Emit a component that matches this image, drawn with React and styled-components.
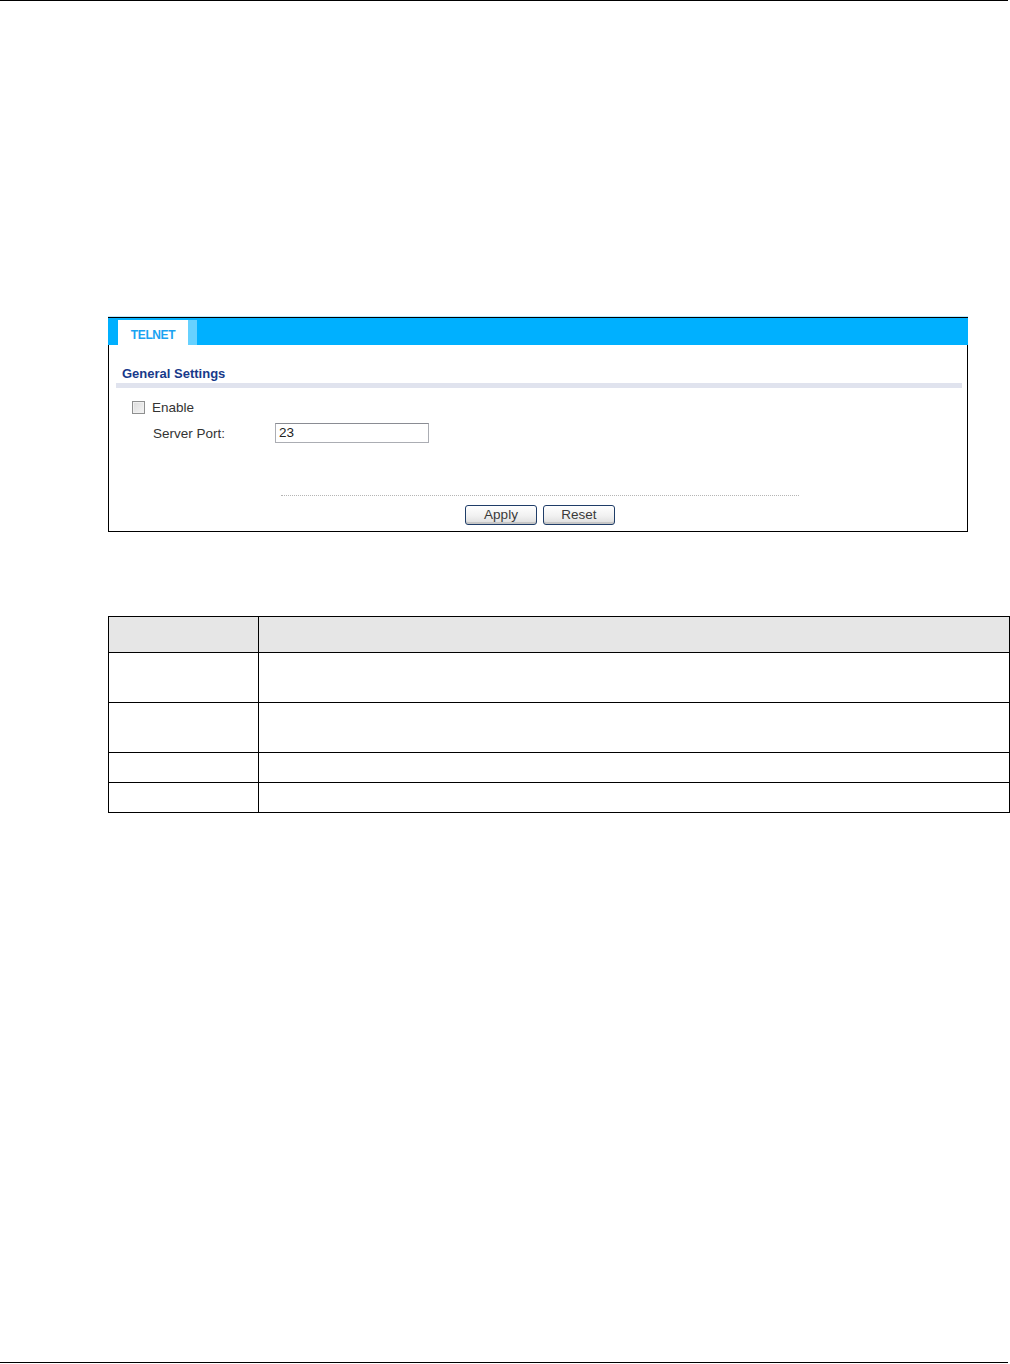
import React from "react";
import styled, { createGlobalStyle } from "styled-components";

const Global = createGlobalStyle`
  html, body { margin: 0; padding: 0; background: #fff; }
  body { font-family: "Liberation Sans", Arial, sans-serif; }
`;

const Page = styled.div`
  width: 1010px;
  min-height: 1364px;
  display: flex;
  flex-direction: column;
  box-sizing: border-box;
`;

const Rule = styled.div`
  width: 1008px;
  height: 1px;
  background: #000;
`;

const BottomRule = styled(Rule)`
  margin-top: auto;
  margin-bottom: 1px;
`;

const Frame = styled.div`
  margin: 316px 0 0 108px;
  width: 860px;
  display: flex;
  flex-direction: column;
`;

const Header = styled.div`
  height: 27px;
  background: #00b0ff;
  border-top: 1px solid #000;
  box-shadow: 0 -1px 0 #b8eaff;
  display: flex;
  align-items: flex-end;
  padding-left: 10px;
`;

const Tab = styled.div`
  width: 70px;
  height: 25px;
  background: #fff;
  color: #1aa3f2;
  font-weight: bold;
  font-size: 12px;
  letter-spacing: -0.4px;
  display: flex;
  align-items: center;
  justify-content: center;
  padding-top: 4px;
  box-sizing: border-box;
`;

const TabEdge = styled.div`
  width: 9px;
  height: 25px;
  background: #66d1ff;
`;

const Body = styled.div`
  border: 1px solid #000;
  border-top: none;
  padding: 21px 5px 6px 7px;
  display: flex;
  flex-direction: column;
`;

const SectionTitle = styled.div`
  font-size: 13px;
  font-weight: bold;
  color: #17398a;
  line-height: 16px;
  padding-left: 6px;
`;

const SectionBar = styled.div`
  height: 5px;
  background: #e0e3ee;
  margin-top: 1px;
`;

const FieldRow = styled.div`
  display: flex;
  align-items: center;
  height: 20px;
  margin-top: ${(p) => p.$top}px;
  padding-left: ${(p) => p.$indent}px;
  font-size: 13.5px;
  color: #333;
`;

const Check = styled.span`
  width: 11px;
  height: 11px;
  border: 1px solid #8e8f8f;
  background: linear-gradient(135deg, #dcdcdc, #f4f4f4);
  box-shadow: inset 0 0 0 1px #f0f0f0;
  margin-right: 7px;
`;

const Label = styled.span`
  width: ${(p) => p.$w || "auto"};
`;

const Input = styled.div`
  width: 149px;
  height: 18px;
  border: 1px solid #abadb3;
  border-top-color: #8a8c93;
  font-size: 13.5px;
  color: #222;
  line-height: 18px;
  padding-left: 3px;
  box-sizing: content-box;
`;

const Dotted = styled.div`
  align-self: center;
  width: 518px;
  border-top: 1px dotted #b5b5b5;
  margin-top: 52px;
  margin-left: 2px;
`;

const Buttons = styled.div`
  display: flex;
  justify-content: center;
  gap: 6px;
  margin-top: 9px;
  margin-left: 2px;
`;

const Button = styled.div`
  width: 70px;
  height: 18px;
  border: 1px solid #1f3d68;
  border-radius: 3px;
  background: linear-gradient(#ffffff, #f1f1f1 55%, #dcdcdc);
  box-shadow: inset 0 -2px 0 #c6c6c6;
  font-size: 13.5px;
  color: #3a3a3a;
  display: flex;
  align-items: center;
  justify-content: center;
  line-height: 18px;
`;

const Table = styled.table`
  margin: 84px 0 0 108px;
  width: 902px;
  border-collapse: collapse;
`;

const Cell = styled.td`
  border: 1px solid #000;
  padding: 0;
  height: ${(p) => p.$h}px;
  width: ${(p) => (p.$first ? "150px" : "auto")};
  background: ${(p) => (p.$head ? "#e6e6e6" : "#fff")};
  box-sizing: border-box;
`;

const rows = [
  { h: 36, head: true },
  { h: 50 },
  { h: 50 },
  { h: 30 },
  { h: 30 },
];

export default function App() {
  return (
    <>
      <Global />
      <Page>
        <Rule />
        <Frame>
          <Header>
            <Tab>TELNET</Tab>
            <TabEdge />
          </Header>
          <Body>
            <SectionTitle>General Settings</SectionTitle>
            <SectionBar />
            <FieldRow $top={9} $indent={16}>
              <Check />
              <Label>Enable</Label>
            </FieldRow>
            <FieldRow $top={6} $indent={37}>
              <Label $w="122px">Server Port:</Label>
              <Input>23</Input>
            </FieldRow>
            <Dotted />
            <Buttons>
              <Button>Apply</Button>
              <Button>Reset</Button>
            </Buttons>
          </Body>
        </Frame>
        <Table>
          <tbody>
            {rows.map((r, i) => (
              <tr key={i}>
                <Cell $h={r.h} $first $head={r.head} />
                <Cell $h={r.h} $head={r.head} />
              </tr>
            ))}
          </tbody>
        </Table>
        <BottomRule />
      </Page>
    </>
  );
}
